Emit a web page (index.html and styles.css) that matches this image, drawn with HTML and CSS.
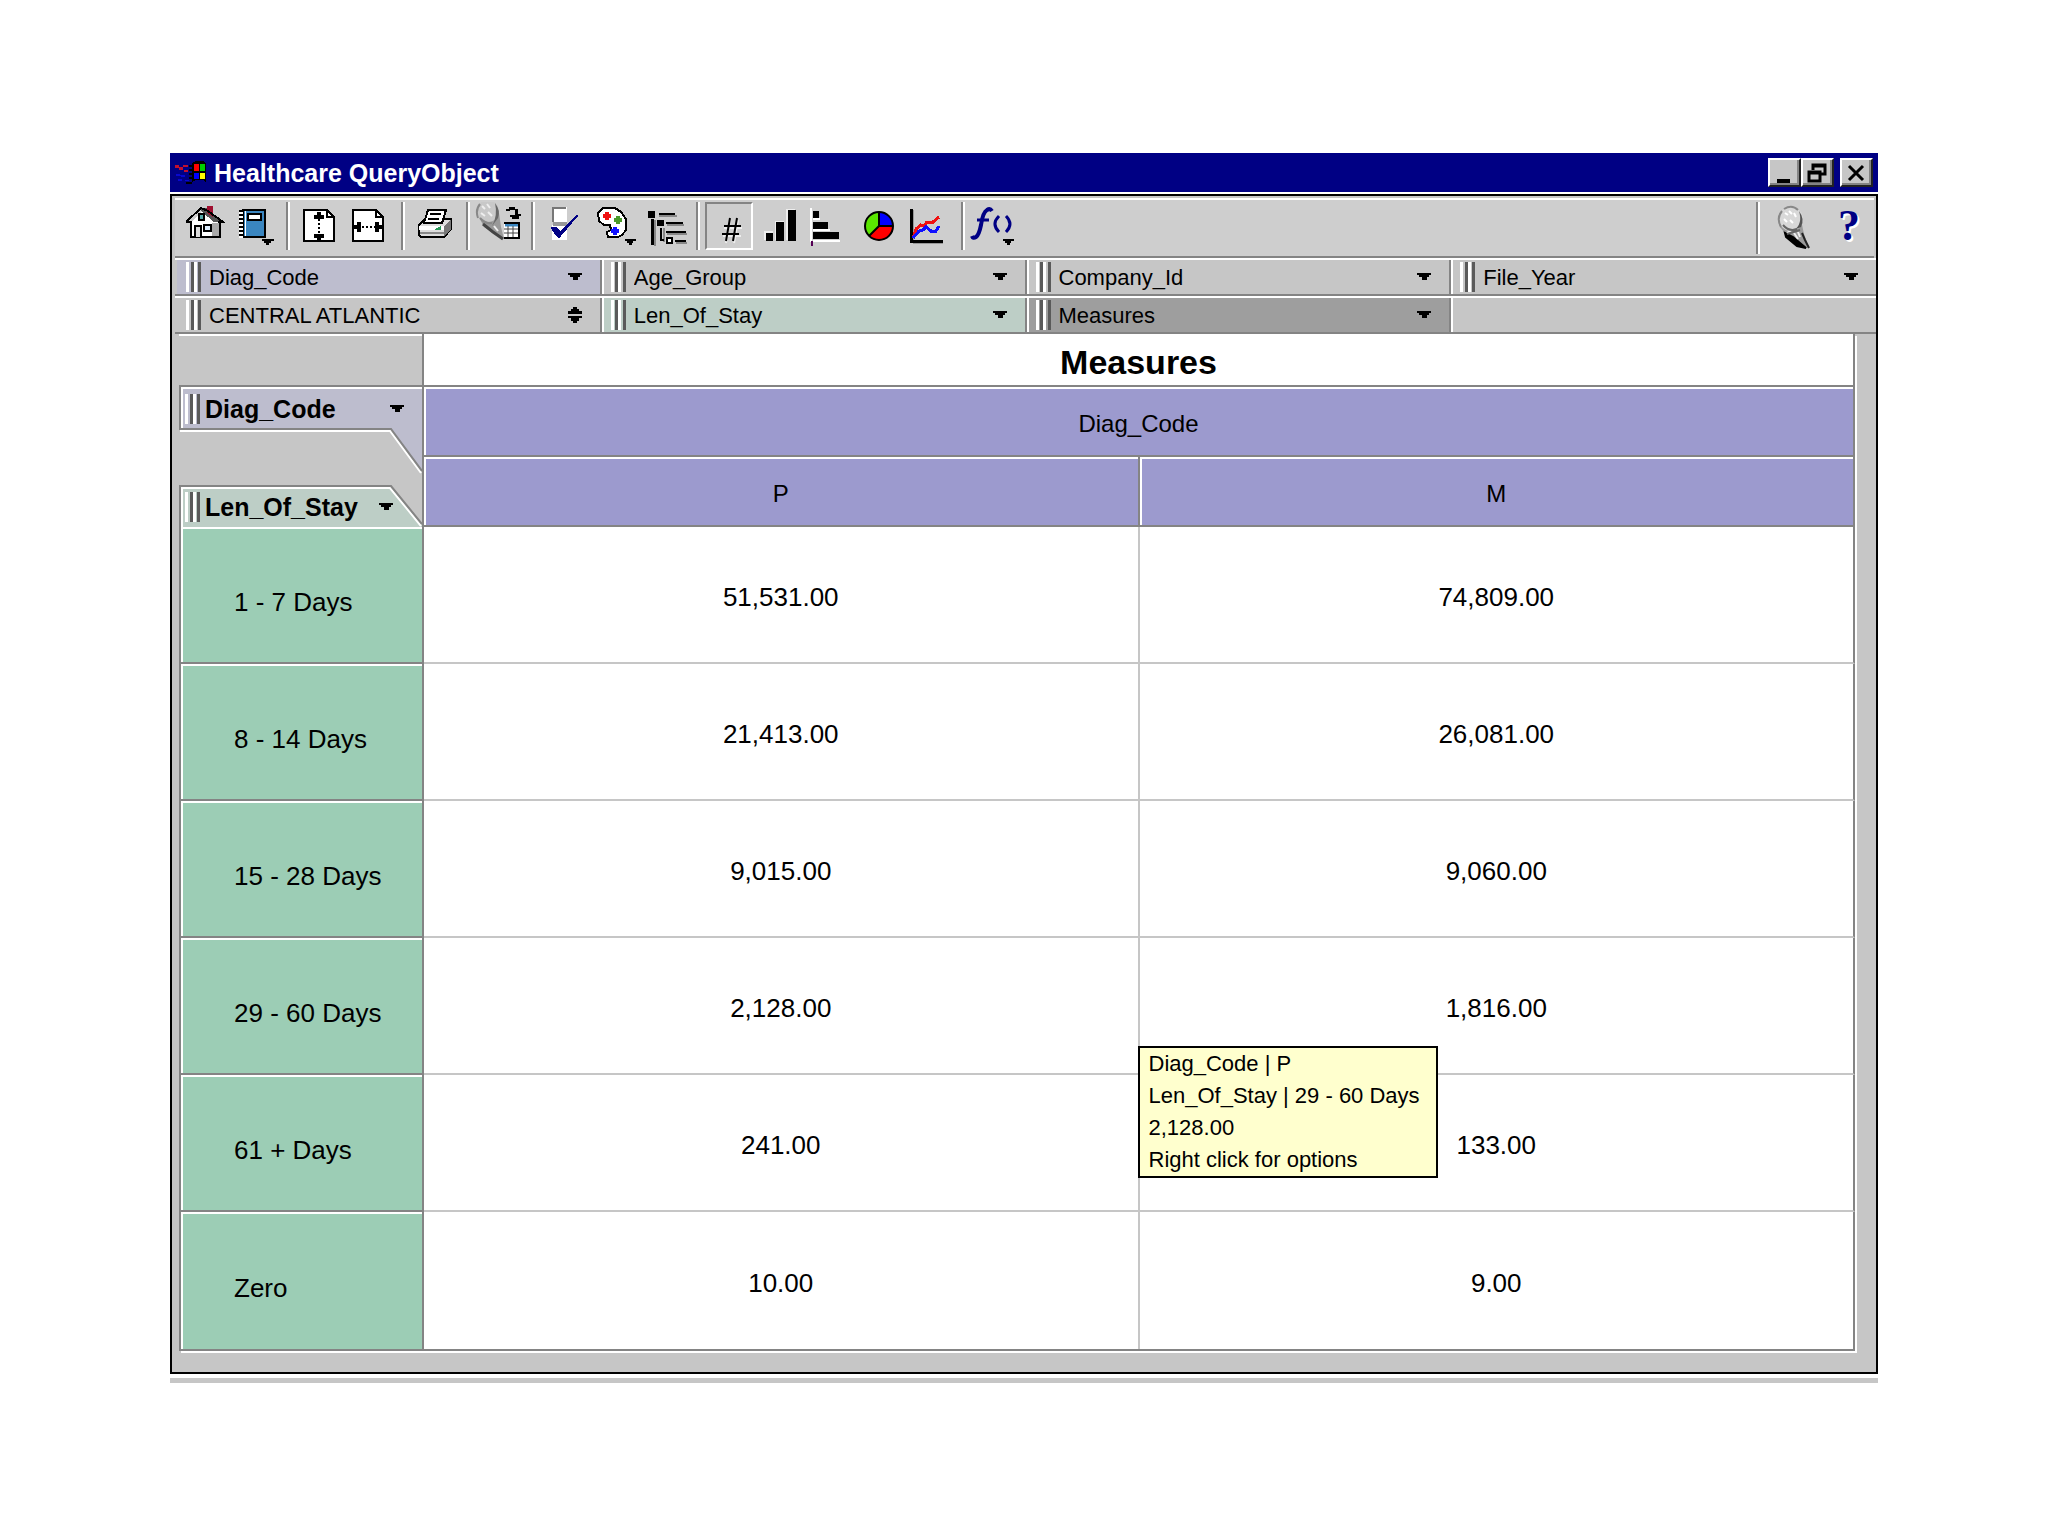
FILE: index.html
```
<!DOCTYPE html>
<html lang="en">
<head>
<meta charset="UTF-8">
<meta name="viewport" content="width=device-width, initial-scale=1.0">
<title>Healthcare QueryObject</title>
<link rel="stylesheet" href="styles.css">
</head>
<body>
<!-- shared arrow and magnifier shapes -->
<svg class="defs" width="0" height="0" aria-hidden="true">
    <symbol id="arrow-down" viewBox="0 0 14 8"><path d="M0 0h14v2h-2v2h-2v3H5V4H2V2H0z"/></symbol>
    <symbol id="arrow-both" viewBox="0 0 14 16"><path d="M5 0h4v2h2v2h3v3H0V4h3V2h2zM0 9h14v2h-3v3H9v2H5v-2H3v-3H0z"/></symbol>
    <symbol id="lens" viewBox="0 0 34 44">
        <path d="M3 22l21-7 3 14 5 14-8-1-13-10z" fill="#9a9a9a"/>
        <path d="M8 28l8 4 13 11-9-2-11-9z" stroke="#000" stroke-width="2"/>
        <path d="M25 28l3 7 4 8" stroke="#222" stroke-width="2" fill="none"/>
        <path d="M17 28l4 6M21 27l2 5M14 26l-4 2" stroke="#eee" stroke-width="2"/>
        <circle cx="14" cy="14" r="12" fill="#d8d8d8"/>
        <path d="M4 22Q-1 13 5 6M7 4q8-5 14 1" fill="none" stroke="#888" stroke-width="2"/>
        <path d="M22 6q6 8 2 16l-7 3q9-6 5-19z" fill="#555"/>
        <path d="M6 20q6 7 14 4M10 29l13-4" fill="none" stroke="#666" stroke-width="2"/>
        <path d="M8 8l3 2M12 6l3 3M17 8l2 4M7 14l3 3M13 15l3 3" stroke="#fff" stroke-width="2"/>
    </symbol>
</svg>

<div class="window">
    <div class="titlebar">
        <svg class="logo" width="34" height="26" viewBox="0 0 34 26" shape-rendering="crispEdges">
            <path d="M1 5h4v2h4v3h5v2h-4v-2H5V8H1zM9 5h5v2H9z" fill="#c01030"/>
            <path d="M2 14h4v1h5v2H7v-1H2zM4 19h4v2H4zM11 20h4v1h-4z" fill="#0808d0"/>
            <path d="M15 6h3M15 10h3M15 14h3M15 18h3M12 23h6" stroke="#000" stroke-width="2"/>
            <path d="M18 3l4-2h7l3 2v19l-3-2h-7l-4 2z" fill="#000"/>
            <path d="M20 4h5v7h-5z" fill="#f00"/><path d="M26 4h5v7h-5z" fill="#0c0"/>
            <path d="M20 13h5v6h-5z" fill="#00f"/><path d="M26 13h5v6h-5z" fill="#ff0"/>
        </svg>
        <h1>Healthcare QueryObject</h1>
        <div class="controls">
            <button class="control" aria-label="Minimize"><svg width="28" height="24" viewBox="0 0 28 24"><path d="M7 18h13v4H7z"/></svg></button>
            <button class="control" aria-label="Restore"><svg width="28" height="24" viewBox="0 0 28 24"><path d="M10 9V4h12v9h-4M10 5h12" fill="none" stroke="#000" stroke-width="3"/><path d="M6 11h11v9H6zM6 12h11" fill="none" stroke="#000" stroke-width="3"/></svg></button>
            <button class="control close" aria-label="Close"><svg width="28" height="24" viewBox="0 0 28 24"><path d="M7 5l14 14M21 5L7 19" stroke="#000" stroke-width="3"/></svg></button>
        </div>
    </div>

    <div class="frame">
        <div class="toolbar">
            <button class="tool" aria-label="Home">
                <svg width="48" height="48" viewBox="0 0 48 48" shape-rendering="crispEdges">
                    <path d="M11 20L22 9l18 11v15H11z" fill="#fff"/>
                    <path d="M32 21h8v14h-8z" fill="#aaa"/>
                    <path d="M21 6h5l17 14h-9L21 9z" fill="#555"/>
                    <path d="M27 4h6v11l-6-4z" fill="#a01030"/>
                    <path d="M6 20L21 6l7 3 15 11h-5M6 20h5v15h29V21" fill="none" stroke="#000" stroke-width="2"/>
                    <path d="M19 12h5v6h-5z" fill="#5aa" stroke="#000" stroke-width="2"/>
                    <path d="M15 35V24h6v11" fill="#ddd" stroke="#000" stroke-width="2"/>
                    <path d="M24 23h7v6h-7z" fill="#def" stroke="#000" stroke-width="2"/>
                </svg>
            </button>
            <button class="tool" aria-label="Notebook">
                <svg width="48" height="48" viewBox="0 0 48 48" shape-rendering="crispEdges">
                    <path d="M13 8h22v27H13z" fill="#3a86c0" stroke="#000" stroke-width="2"/>
                    <path d="M15 9v25" stroke="#fff"/>
                    <path d="M18 12h13v6H18z" fill="#fff" stroke="#000" stroke-width="2"/>
                    <path d="M11 8v28" stroke="#fff" stroke-width="4"/>
                    <path d="M11 8v28" stroke="#000" stroke-width="4" stroke-dasharray="2 2"/>
                    <path d="M32 37h12v2h-3v2h-2v2h-3v-2h-2v-2h-2z"/>
                </svg>
            </button>
            <span class="divider"></span>
            <button class="tool" aria-label="Fit height">
                <svg width="48" height="48" viewBox="0 0 48 48" shape-rendering="crispEdges">
                    <path d="M9 8h23l7 7v24H9z" fill="#fff" stroke="#000" stroke-width="2"/>
                    <path d="M32 8v7h7" fill="none" stroke="#000" stroke-width="2"/>
                    <path d="M22 10h4v3h3v4H19v-4h3zM22 39h4v-3h3v-4H19v4h3z"/>
                    <path d="M24 17v15" stroke="#000" stroke-width="2" stroke-dasharray="2 2"/>
                </svg>
            </button>
            <button class="tool" aria-label="Fit width">
                <svg width="48" height="48" viewBox="0 0 48 48" shape-rendering="crispEdges">
                    <path d="M8 8h23l7 7v24H8z" fill="#fff" stroke="#000" stroke-width="2"/>
                    <path d="M31 8v7h7" fill="none" stroke="#000" stroke-width="2"/>
                    <path d="M9 23h3v-3h4v10h-4v-3H9zM37 23h-3v-3h-4v10h4v-3h3z"/>
                    <path d="M17 25h13" stroke="#000" stroke-width="2" stroke-dasharray="2 2"/>
                </svg>
            </button>
            <span class="divider"></span>
            <button class="tool" aria-label="Print">
                <svg width="48" height="48" viewBox="0 0 48 48" shape-rendering="crispEdges">
                    <path d="M9 23l6-6h26v10l-7 8H11l-2-2z" fill="#ddd" stroke="#000" stroke-width="2"/>
                    <path d="M34 24l7-6v9l-7 8z" fill="#777"/>
                    <path d="M9 24h25v4H9z" fill="#fff"/>
                    <path d="M10 31h24" stroke="#888" stroke-width="2"/>
                    <path d="M14 21l4-13h18l-4 13z" fill="#fff" stroke="#000" stroke-width="2"/>
                    <path d="M20 12h11M18 17h11" stroke="#000" stroke-width="2"/>
                    <path d="M25 27l6-3v4h-6z" fill="#2a9a5a"/>
                </svg>
            </button>
            <span class="divider"></span>
            <button class="tool" aria-label="Query to table">
                <svg width="48" height="48" viewBox="0 0 48 48">
                    <path d="M4 15l20-4 2 14 3 12-8-4-12-8z" fill="#999"/>
                    <path d="M8 22l10 8 10 7" fill="none" stroke="#444" stroke-width="3"/>
                    <circle cx="13" cy="9" r="11" fill="#c8c8c8"/>
                    <path d="M20 1q6 8 3 15l-6 8q6-10 3-23z" fill="#666"/>
                    <path d="M3 16Q0 8 5 2M5 16q5 6 12 5" fill="none" stroke="#888" stroke-width="2"/>
                    <path d="M7 4l3 3M12 2l3 4M6 11l4 3M13 10l4 4M19 24l4 5" stroke="#eee" stroke-width="2"/>
                    <path d="M29 21h16v15H29z" fill="#fff"/>
                    <path d="M30 23h14" stroke="#3a86c0" stroke-width="3"/>
                    <path d="M29 27h15M29 31h15M33 24v12M38 24v12" stroke="#444"/>
                    <path d="M29 21h15v15H29" fill="none" stroke="#000" stroke-width="2"/>
                    <path d="M31 7h3V5h6v2h3v5h3v2h-2v3h-7v-2h-2v-2h5V8h-5v1h-4z"/>
                </svg>
            </button>
            <span class="divider"></span>
            <button class="tool" aria-label="Select">
                <svg width="48" height="48" viewBox="0 0 48 48" shape-rendering="crispEdges">
                    <path d="M12 5h15v15H12zM12 23h15v15H12z" fill="#fff"/>
                    <path d="M13 20V6h13" fill="none" stroke="#777" stroke-width="2"/>
                    <path d="M13 20h14v4H13z" fill="#999"/>
                    <path d="M11 25h5l4 4L37 12l1 2-17 20-2 2-2-1-5-7z" fill="#000084"/>
                </svg>
            </button>
            <button class="tool" aria-label="Colors">
                <svg width="48" height="48" viewBox="0 0 48 48" shape-rendering="crispEdges">
                    <path d="M13 6h12l6 4 5 7v11l-4 5-4 2H18l-1-5 4-2-1-5h-6l-5-4-1-8z" fill="#fff" stroke="#000" stroke-width="2"/>
                    <path d="M15 10h4v2h2v4h-2v2h-4v-2h-2v-4h2z" fill="#f01010"/>
                    <path d="M26 14h4v2h2v4h-2v2h-4v-2h-2v-4h2z" fill="#4a9a2a"/>
                    <path d="M23 25h4v2h2v4h-2v2h-4v-2h-2v-4h2z" fill="#1010ff"/>
                    <path d="M35 37h11v2h-3v2h-1v2h-3v-2h-2v-2h-2z"/>
                </svg>
            </button>
            <button class="tool" aria-label="Outline">
                <svg width="48" height="48" viewBox="0 0 48 48" shape-rendering="crispEdges">
                    <path d="M19 14h18M27 23h17M27 32h20M36 41h11M15 18v26M24 26v14" stroke="#888" stroke-width="2"/>
                    <path d="M8 9h7v7H8zM17 18h7v6h-7zM19 11h16v2H19zM26 20h17v2H26zM26 29h20v2H26zM35 38h11v2H35zM11 17h3v26h-3zM20 26h2v13h-2zM20 37h4v2h-4z"/>
                    <path d="M27 36h5v5h-5z" fill="#fff" stroke="#000" stroke-width="2"/>
                </svg>
            </button>
            <span class="divider"></span>
            <button class="tool pressed" aria-label="Numbers" aria-pressed="true">
                <svg width="44" height="44" viewBox="2 2 44 44">
                    <path d="M25 18l-4 23M33 18l-4 23M19 26h18M18 34h18" stroke="#eee" stroke-width="2"/>
                    <path d="M25 16l-4 23M32 16l-4 23M19 24h17M17 32h17" stroke="#000" stroke-width="2"/>
                </svg>
            </button>
            <button class="tool" aria-label="Bar chart">
                <svg width="48" height="48" viewBox="0 0 48 48" shape-rendering="crispEdges">
                    <path d="M9 29h9v9H9zM20 19h9v19h-9zM31 7h9v31h-9z" fill="#eee"/>
                    <path d="M11 31h7v8h-7zM21 20h8v19h-8zM33 8h8v31h-8z"/>
                </svg>
            </button>
            <button class="tool" aria-label="Horizontal bar chart">
                <svg width="48" height="48" viewBox="0 0 48 48" shape-rendering="crispEdges">
                    <path d="M6 6v34M8 17h7M8 28h17M8 39h27" stroke="#fff" stroke-width="2"/>
                    <path d="M8 9h6v7H8zM8 20h15v7H8zM8 30h26v7H8z"/>
                    <path d="M6 39h2v5H6z" fill="#505"/>
                </svg>
            </button>
            <button class="tool" aria-label="Pie chart">
                <svg width="48" height="48" viewBox="0 0 48 48">
                    <circle cx="24" cy="24" r="14" fill="#5ae600"/>
                    <path d="M24 24V10a14 14 0 0 1 14 14z" fill="#00f"/>
                    <path d="M24 24h14a14 14 0 0 1-24 10z" fill="#f00"/>
                    <path d="M24 10v14h14M24 24L14 34" fill="none" stroke="#000" stroke-width="2"/>
                    <circle cx="24" cy="24" r="14" fill="none" stroke="#000" stroke-width="2"/>
                </svg>
            </button>
            <button class="tool" aria-label="Line chart">
                <svg width="48" height="48" viewBox="0 0 48 48" shape-rendering="crispEdges">
                    <path d="M8 41h30M8 8v30" stroke="#999" stroke-width="2"/>
                    <path d="M6 7v32h32" fill="none" stroke="#000" stroke-width="3"/>
                    <path d="M8 36l3-9 5-4 3 1 3-4h6l6-5" fill="none" stroke="#f01010" stroke-width="3"/>
                    <path d="M8 36l6-7 4-1 3-3 5 4h5l3-5" fill="none" stroke="#1010ff" stroke-width="3"/>
                </svg>
            </button>
            <span class="divider"></span>
            <button class="tool" aria-label="Functions">
                <svg width="48" height="48" viewBox="0 0 48 48">
                    <path d="M2 34q1 3 4 1 3-2 5-12 2-13 6-15 3-2 5 1" fill="none" stroke="#000084" stroke-width="4"/>
                    <path d="M7 18h12" stroke="#000084" stroke-width="3"/>
                    <path d="M29 14q-8 8 0 16M36 14q8 8 0 16" fill="none" stroke="#000084" stroke-width="3"/>
                    <path d="M33 37h11v2h-3v2h-1v2h-3v-2h-2v-2h-2z"/>
                </svg>
            </button>
            <span class="divider push"></span>
            <button class="tool find" aria-label="Find"><svg width="34" height="44"><use href="#lens"/></svg></button>
            <button class="tool help" aria-label="Help">?</button>
        </div>

        <div class="filters">
            <label class="chip violet">
                <span class="grip"></span>
                <select aria-label="Diagnosis code"><option>Diag_Code</option></select>
                <svg width="14" height="8"><use href="#arrow-down"/></svg>
            </label>
            <label class="chip">
                <span class="grip"></span>
                <select aria-label="Age group"><option>Age_Group</option></select>
                <svg width="14" height="8"><use href="#arrow-down"/></svg>
            </label>
            <label class="chip">
                <span class="grip"></span>
                <select aria-label="Company"><option>Company_Id</option></select>
                <svg width="14" height="8"><use href="#arrow-down"/></svg>
            </label>
            <label class="chip">
                <span class="grip"></span>
                <select aria-label="File year"><option>File_Year</option></select>
                <svg width="14" height="8"><use href="#arrow-down"/></svg>
            </label>
        </div>
        <div class="filters">
            <label class="chip">
                <span class="grip"></span>
                <select aria-label="Region"><option>CENTRAL ATLANTIC</option></select>
                <svg width="14" height="16"><use href="#arrow-both"/></svg>
            </label>
            <label class="chip green">
                <span class="grip"></span>
                <select aria-label="Length of stay"><option>Len_Of_Stay</option></select>
                <svg width="14" height="8"><use href="#arrow-down"/></svg>
            </label>
            <label class="chip dark">
                <span class="grip"></span>
                <select aria-label="Measures"><option>Measures</option></select>
                <svg width="14" height="8"><use href="#arrow-down"/></svg>
            </label>
            <div class="chip"></div>
        </div>

        <div class="pivot">
            <table>
                <thead>
                    <tr class="caption">
                        <td class="corner" rowspan="3">
                            <svg class="tabs" width="243" height="190" viewBox="0 0 243 190">
                                <path d="M1 49h242v85l-31-42H1z" fill="#bdbdce"/>
                                <path d="M3 91V51h240M1 94h210l31 42" fill="none" stroke="#fff" stroke-width="2"/>
                                <path d="M243 49H1v43h211l31 42" fill="none" stroke="#848484" stroke-width="2"/>
                                <path d="M1 149h211l31 38v5H1z" fill="#bdcec6"/>
                                <path d="M3 190v-39h208l31 38" fill="none" stroke="#fff" stroke-width="2"/>
                                <path d="M1 190v-41h211l31 38" fill="none" stroke="#848484" stroke-width="2"/>
                            </svg>
                            <label class="tab">
                                <span class="grip"></span>
                                <select aria-label="Column dimension"><option>Diag_Code</option></select>
                                <svg width="14" height="8"><use href="#arrow-down"/></svg>
                            </label>
                            <label class="tab stay">
                                <span class="grip"></span>
                                <select aria-label="Row dimension"><option>Len_Of_Stay</option></select>
                                <svg width="14" height="8"><use href="#arrow-down"/></svg>
                            </label>
                        </td>
                        <th class="measures" colspan="2">Measures</th>
                    </tr>
                    <tr class="dims"><th class="dim" colspan="2">Diag_Code</th></tr>
                    <tr class="dims"><th class="dim">P</th><th class="dim">M</th></tr>
                </thead>
                <tbody>
                    <tr><th>1 - 7 Days</th><td>51,531.00</td><td>74,809.00</td></tr>
                    <tr><th>8 - 14 Days</th><td>21,413.00</td><td>26,081.00</td></tr>
                    <tr><th>15 - 28 Days</th><td>9,015.00</td><td>9,060.00</td></tr>
                    <tr>
                        <th>29 - 60 Days</th>
                        <td class="hovered">2,128.00
                            <div class="tooltip" role="tooltip">
                                <div>Diag_Code | P</div>
                                <div>Len_Of_Stay | 29 - 60 Days</div>
                                <div>2,128.00</div>
                                <div>Right click for options</div>
                            </div>
                        </td>
                        <td>1,816.00</td>
                    </tr>
                    <tr><th>61 + Days</th><td>241.00</td><td>133.00</td></tr>
                    <tr><th>Zero</th><td>10.00</td><td>9.00</td></tr>
                </tbody>
            </table>
        </div>
    </div>
    <div class="underline"></div>
</div>
</body>
</html>
```
FILE: styles.css
```
* {
    box-sizing: border-box;
}
body {
    margin: 0;
    padding: 153px 170px;
    background-color: #fff;
    color: #000;
    font-family: "Liberation Sans", Arial, sans-serif;
    font-size: 22px;
}
button {
    padding: 0;
    border: none;
    background: none;
}
svg {
    display: block;
}
.defs {
    position: absolute;
}

/* title bar */
.titlebar {
    display: flex;
    align-items: center;
    height: 39px;
    padding: 0 5px 0 4px;
    background-color: #000084;
}
.titlebar h1 {
    flex: 1;
    margin: 0 0 0 6px;
    color: #fff;
    font-size: 25px;
    line-height: 38px;
}
.controls {
    display: flex;
}
.control {
    width: 33px;
    height: 29px;
    background-color: #c6c6c6;
    border: 2px solid;
    border-color: #fff #222 #222 #fff;
    box-shadow: inset -2px -2px #848484;
}
.close {
    margin-left: 6px;
}

/* window frame */
.frame {
    margin-top: 2px;
    padding-top: 2px;
    background-color: #c6c6c6;
    border: 2px solid #000;
}
.toolbar {
    display: flex;
    align-items: flex-start;
    gap: 2px;
    height: 60px;
    margin: 0 2px 0 3px;
    padding: 2px 1px 0 5px;
    background-color: #cecece;
    border-top: 2px solid #fff;
    border-bottom: 2px solid #848484;
}
.tool {
    width: 48px;
    height: 48px;
}
.pressed {
    border: 2px solid;
    border-color: #848484 #fff #fff #848484;
}
.divider {
    width: 4px;
    height: 48px;
    margin: 0 3px 0 6px;
    border-left: 2px solid #848484;
    border-right: 2px solid #fff;
}
.push {
    height: 52px;
    margin-left: auto;
}
.find {
    margin-right: 10px;
    padding: 1px 0 0 12px;
}
.help {
    color: #000084;
    font-family: "Liberation Serif", serif;
    font-size: 44px;
    font-weight: bold;
    line-height: 44px;
    text-shadow: 2px 2px #fff;
}

/* filter rows */
.filters {
    display: grid;
    grid-template-columns: repeat(4, 1fr);
    height: 38px;
    margin-left: 3px;
    padding-left: 2px;
    border-top: 2px solid #fff;
    border-bottom: 2px solid #848484;
}
.chip {
    display: flex;
    align-items: center;
    padding: 0 18px 0 7px;
    border-left: 2px solid #fff;
    border-right: 2px solid #848484;
}
.chip:first-child {
    border-left-color: transparent;
}
.chip:last-child {
    border-right: none;
}
.violet {
    background-color: #bdbdce;
}
.green {
    background-color: #bdcec6;
}
.dark {
    background-color: #9e9e9e;
}
select {
    flex: 1;
    min-width: 0;
    padding: 0;
    border: none;
    background: none;
    color: #000;
    font: inherit;
    appearance: none;
}
.grip {
    display: flex;
    justify-content: space-between;
    width: 15px;
    height: 30px;
    margin-right: 8px;
}
.grip::before,
.grip::after {
    content: "";
    width: 6px;
    border-left: 3px solid #fff;
    border-right: 3px solid #5a5a5a;
}

/* pivot table */
.pivot {
    padding: 0 21px 21px 7px;
}
table {
    width: 100%;
    table-layout: fixed;
    border-spacing: 0;
    background-color: #fff;
    border-bottom: 2px solid #848484;
    box-shadow: 2px 2px #fff;
    font-size: 26px;
}
th,
td {
    padding: 6px 0 0;
    font-weight: normal;
    text-align: center;
}
.caption {
    height: 53px;
}
.dims {
    height: 70px;
}
.corner {
    position: relative;
    width: 245px;
    padding-top: 54px;
    background-color: #c6c6c6;
    border-right: 2px solid #848484;
    box-shadow: inset 0 2px #fff;
    vertical-align: top;
}
.tabs {
    position: absolute;
    top: 3px;
    left: 0;
}
.tab {
    position: relative;
    display: flex;
    align-items: center;
    height: 42px;
    margin-bottom: 58px;
    padding: 0 18px 0 6px;
    font-size: 25px;
    font-weight: bold;
}
.tab .grip {
    margin-right: 5px;
}
.stay {
    height: 38px;
    margin-bottom: 0;
    padding-right: 29px;
}
.measures {
    padding-top: 4px;
    border-right: 2px solid #848484;
    border-bottom: 2px solid #848484;
    font-size: 34px;
    font-weight: bold;
    line-height: 40px;
}
.dim {
    background-color: #9c9ace;
    border-right: 2px solid #848484;
    border-bottom: 2px solid #848484;
    box-shadow: inset 2px 2px #fff;
    font-size: 24px;
}
tbody tr {
    height: 137px;
}
tbody th {
    padding: 16px 0 0 53px;
    background-color: #9ccdb5;
    border-left: 2px solid #848484;
    border-right: 2px solid #848484;
    border-bottom: 2px solid #848484;
    box-shadow: inset 2px 2px #fff;
    text-align: left;
}
tbody td {
    border-right: 2px solid #c6c6c6;
    border-bottom: 2px solid #c6c6c6;
}
tbody td:last-child {
    border-right-color: #848484;
}
tbody tr:last-child th,
tbody tr:last-child td {
    border-bottom: none;
}

.hovered {
    position: relative;
}
.tooltip {
    position: absolute;
    z-index: 1;
    top: 108px;
    left: 100%;
    padding: 0 16px 0 9px;
    background-color: #ffffce;
    border: 2px solid #000;
    font-size: 22px;
    line-height: 32px;
    text-align: left;
    white-space: nowrap;
}
.underline {
    height: 5px;
    margin-top: 4px;
    background-color: #c6c6c6;
}
```
